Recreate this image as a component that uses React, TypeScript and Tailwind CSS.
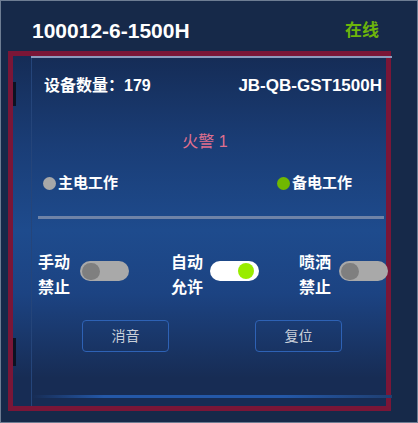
import React from 'react';

const FONT = { fontFamily: '"Liberation Sans", "Noto Sans CJK SC", sans-serif' };

function Toggle({ on }: { on?: boolean }) {
  return (
    <div
      className={[
        'flex h-[20px] w-[49px] shrink-0 items-center rounded-full px-[2px]',
        on ? 'justify-end bg-white' : 'justify-start bg-[#a9a9a9]',
      ].join(' ')}
    >
      <div
        className={[
          'rounded-full',
          on ? 'mr-[3px] h-[16px] w-[16px] bg-[#99ec00]' : 'h-[17px] w-[18px] bg-[#7f7f7f]',
        ].join(' ')}
      />
    </div>
  );
}

function ToggleGroup({ top, bottom, on, gap, className }: { top: string; bottom: string; on?: boolean; gap: string; className?: string }) {
  return (
    <div className={['flex items-start', className ?? ''].join(' ')}>
      <div className="w-[33px] text-[16px] font-bold leading-[25px] text-white">
        <div>{top}</div>
        <div>{bottom}</div>
      </div>
      <div className={['mt-[11px]', gap].join(' ')}>
        <Toggle on={on} />
      </div>
    </div>
  );
}

export default function App() {
  return (
    <div className="h-[423px] w-[418px] overflow-hidden border border-[#6e7d93] bg-[#162949]" style={FONT}>
      {/* header */}
      <div className="flex h-[50px] items-center justify-between pl-[31px] pr-[38px] pt-[8px]">
        <span className="text-[21px] font-bold leading-none text-white">100012-6-1500H</span>
        <span className="text-[17px] font-bold leading-none text-[#6db40b]">在线</span>
      </div>

      {/* device frame */}
      <div className="relative ml-[7px] flex h-[360px] w-[383px] flex-col border-[5px] border-[#7a1637] bg-[linear-gradient(to_bottom,#152c56_0%,#1a3d76_25%,#1e4b8d_50%,#1c4382_68%,#172c54_92%)]">
        <div className="absolute left-0 top-[26px] h-[24px] w-[3px] bg-[#0b1222]" />
        <div className="absolute left-0 top-[282px] h-[28px] w-[3px] bg-[#0b1222]" />

        <div className="ml-[18px] mr-[-6px] h-[2px] bg-[#8c9bbd]" />

        <div className="ml-[18px] flex flex-1 flex-col border-l border-[#25457a]">
          <div className="mt-[18px] flex h-[20px] items-center justify-between pl-[12px] pr-[4px] font-bold text-white">
            <span className="text-[16px]">设备数量：179</span>
            <span className="text-[17px]">JB-QB-GST1500H</span>
          </div>

          <div className="mt-[36px] h-[20px] pr-[8px] text-center text-[16px] leading-5 text-[#df6f8e]">火警 1</div>

          <div className="mt-[21px] flex h-[20px] items-center justify-between pl-[11px] pr-[34px] text-[15px] font-bold text-white">
            <div className="flex items-center gap-[2px]">
              <span className="h-[13px] w-[13px] rounded-full bg-[#a8a8a8]" />
              <span>主电工作</span>
            </div>
            <div className="flex items-center gap-[2px]">
              <span className="h-[13px] w-[13px] rounded-full bg-[#70b800]" />
              <span>备电工作</span>
            </div>
          </div>

          <div className="ml-[6px] mr-[2px] mt-[23px] h-[3px] bg-[#6f83a7]" />

          <div className="mt-[31px] flex pl-[6px]">
            <ToggleGroup top="手动" bottom="禁止" gap="ml-[9px]" />
            <ToggleGroup top="自动" bottom="允许" on gap="ml-[6px]" className="ml-[42px]" />
            <ToggleGroup top="喷洒" bottom="禁止" gap="ml-[7px]" className="ml-[40px]" />
          </div>

          <div className="mt-[20px] flex pl-[50px]">
            <button className="h-[32px] w-[87px] rounded-[4px] border-[1.5px] border-[#2e62b5] text-[14px] text-[#c9cfd9]">
              消音
            </button>
            <button className="ml-[86px] h-[32px] w-[87px] rounded-[4px] border-[1.5px] border-[#2e62b5] text-[14px] text-[#c9cfd9]">
              复位
            </button>
          </div>

          <div className="mb-[8px] mr-[-6px] mt-auto h-[3px] bg-[linear-gradient(to_right,transparent,#2458a8_20%,#2458a8_70%,#1f3f72)]" />
        </div>
      </div>
    </div>
  );
}
